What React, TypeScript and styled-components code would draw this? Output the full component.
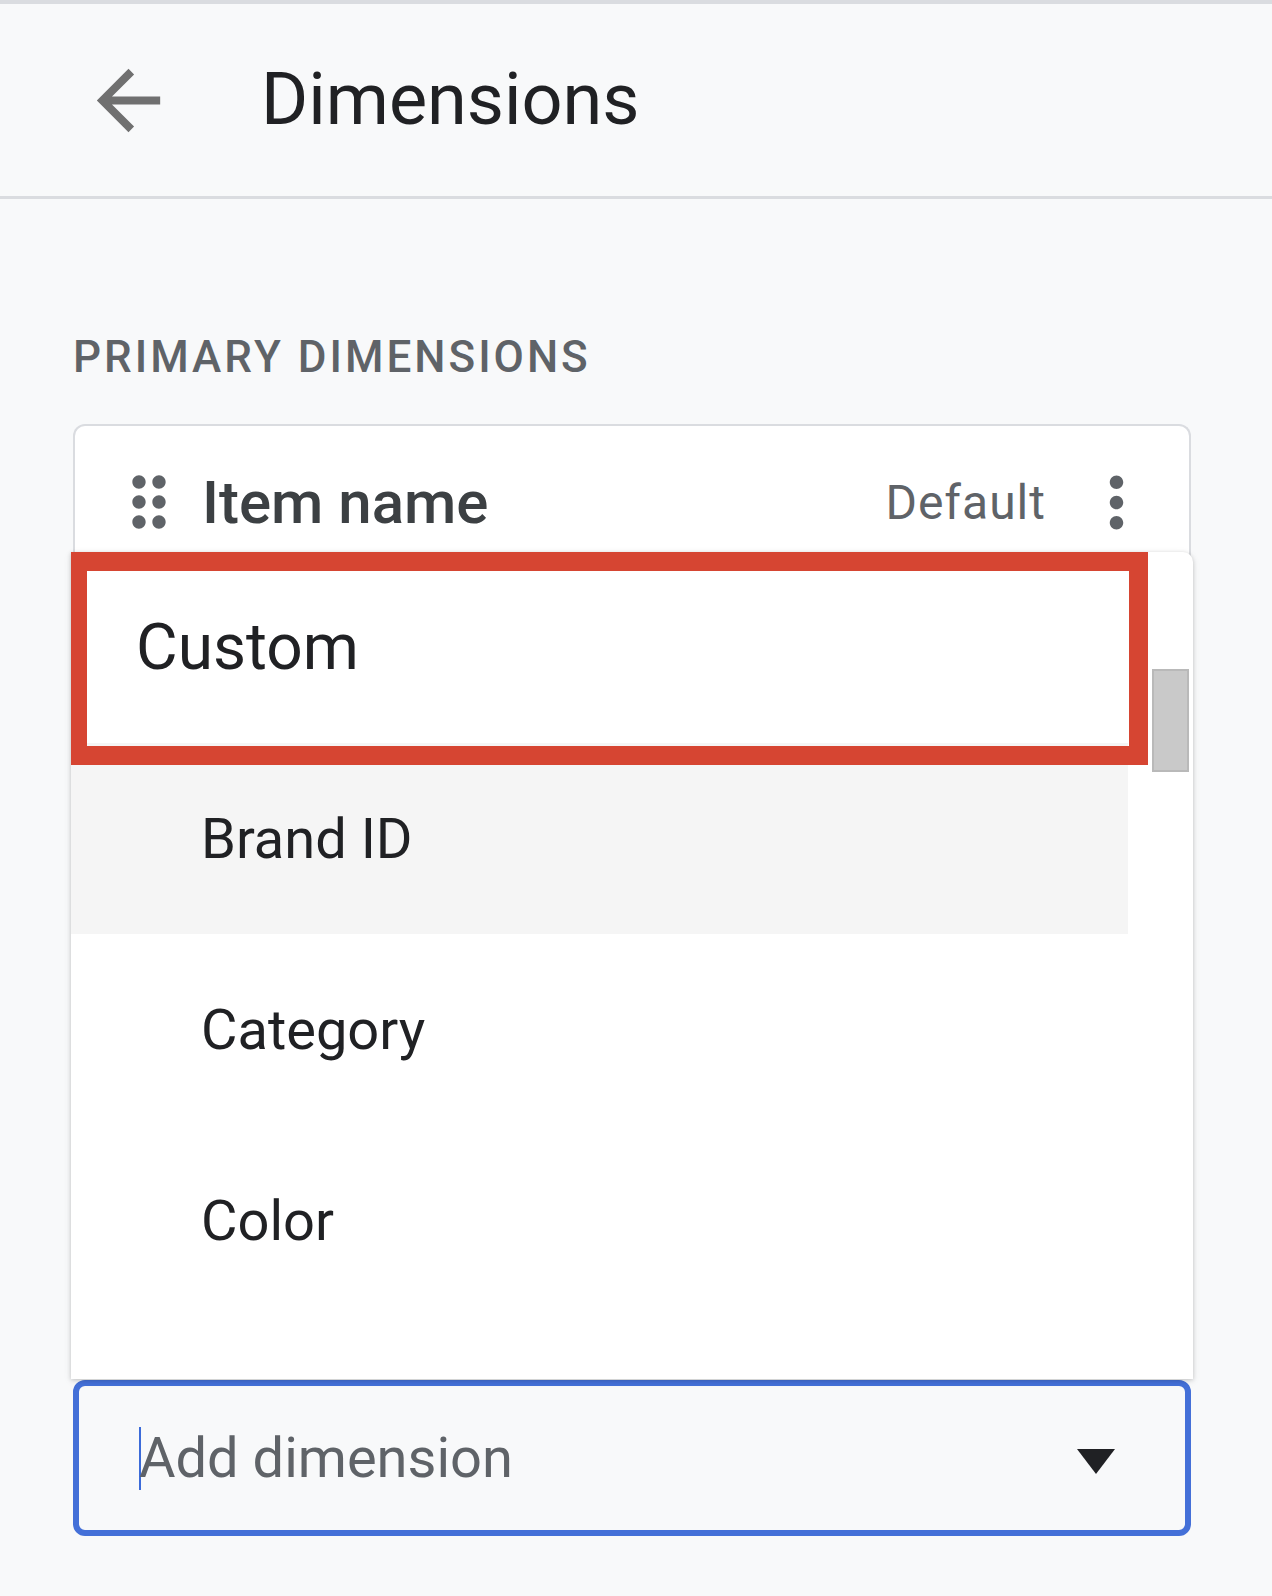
import styled, {createGlobalStyle} from 'styled-components';

const GlobalStyle = createGlobalStyle`
	html, body {
		margin: 0;
		padding: 0;
		background: #f8f9fa;
		font-family: Roboto, 'Noto Sans', Arial, sans-serif;
	}
`;

const Page = styled.div`
	width: 1272px;
	min-height: 1596px;
	background: #f8f9fa;
	border-top: 4px solid #dadce0;
	box-sizing: border-box;
`;

const Header = styled.header`
	height: 195px;
	display: flex;
	align-items: center;
	padding: 0 0 0 81px;
	box-sizing: border-box;
	border-bottom: 3px solid #dadce0;
`;

const BackButton = styled.button`
	width: 95px;
	height: 95px;
	padding: 0;
	border: none;
	background: none;
	color: #707070;
	display: flex;
	cursor: pointer;
`;

const Title = styled.h1`
	margin: 0 0 0 85px;
	font-size: 72px;
	font-weight: 400;
	color: #202124;
	line-height: 1;
`;

const Content = styled.main`
	padding: 136px 81px 0 73px;
`;

const SectionLabel = styled.div`
	font-size: 44px;
	line-height: 1;
	font-weight: 500;
	letter-spacing: 3px;
	color: #5f6368;
	margin-bottom: 45px;
`;

const Card = styled.div`
	width: 1118px;
	height: 910px;
	box-sizing: border-box;
	background: #fff;
	border: 2px solid #dadce0;
	border-radius: 12px 12px 0 0;
	border-bottom: none;
`;

const DimensionRow = styled.div`
	height: 152px;
	display: flex;
	align-items: center;
	padding: 0 32px 0 34px;
`;

const Handle = styled.span`
	width: 80px;
	height: 80px;
	color: #5f6368;
	display: flex;
	margin-right: 13px;
	flex-shrink: 0;
`;

const ItemName = styled.span`
	flex: 1;
	font-size: 60px;
	font-weight: 500;
	color: #3c4043;
`;

const DefaultTag = styled.span`
	font-size: 48px;
	letter-spacing: 1px;
	color: #5f6368;
	margin-right: -5px;
`;

const MoreButton = styled.button`
	width: 81px;
	height: 81px;
	padding: 0;
	border: none;
	background: none;
	color: #5f6368;
	display: flex;
	margin-left: 35px;
	cursor: pointer;
`;

const InputWrap = styled.div`
	position: relative;
	width: 1118px;
	margin-top: 46px;
`;

const Menu = styled.div`
	position: absolute;
	left: -2px;
	right: -2px;
	bottom: calc(100% + 1px);
	height: 827px;
	display: flex;
	background: #fff;
	border-radius: 0 10px 0 0;
	box-shadow: 0 1px 4px rgba(0, 0, 0, 0.18), 0 2px 8px rgba(0, 0, 0, 0.08);
	overflow: hidden;
	z-index: 2;
`;

const OptionList = styled.ul`
	flex: 1;
	list-style: none;
	margin: 0;
	padding: 0;
`;

const Option = styled.li<{$group?: boolean; $hover?: boolean}>`
	height: 191px;
	display: flex;
	align-items: center;
	padding-left: ${p => (p.$group ? '65px' : '130px')};
	font-size: ${p => (p.$group ? '64px' : '56px')};
	color: #202124;
	background: ${p => (p.$hover ? '#f5f5f5' : 'transparent')};
	cursor: pointer;
`;

const ScrollTrack = styled.div`
	width: 65px;
	flex-shrink: 0;
	padding: 117px 4px 0 24px;
	box-sizing: border-box;
`;

const ScrollThumb = styled.div`
	height: 103px;
	background: #c9c9c9;
	border: 2px solid #b9b9b9;
	box-sizing: border-box;
`;

const Highlight = styled.div`
	position: absolute;
	left: -3px;
	top: 0;
	width: 1080px;
	height: 213px;
	box-sizing: border-box;
	border: 19px solid #d64532;
	pointer-events: none;
`;

const InputBox = styled.label`
	height: 156px;
	display: flex;
	align-items: center;
	box-sizing: border-box;
	border: 6px solid #4470d8;
	border-radius: 12px;
	background: #f8f9fa;
	padding: 0 70px 0 60px;
`;

const Caret = styled.span`
	width: 2px;
	height: 63px;
	background: #3b6bd9;
	margin-right: -2px;
	flex-shrink: 0;
`;

const Placeholder = styled.span`
	flex: 1;
	font-size: 56px;
	color: #5f6368;
`;

const DropArrow = styled.span`
	width: 0;
	height: 0;
	border-left: 19px solid transparent;
	border-right: 19px solid transparent;
	border-top: 25px solid #202124;
	margin-top: 6px;
`;

const options = ['Brand ID', 'Category', 'Color'];

const App = () => {
	return (
		<Page>
			<GlobalStyle />
			<Header>
				<BackButton aria-label="Back">
					<svg viewBox="0 0 24 24" width="95" height="95" fill="currentColor">
						<path d="M20 11H7.83l5.59-5.59L12 4l-8 8 8 8 1.41-1.41L7.83 13H20v-2z" />
					</svg>
				</BackButton>
				<Title>Dimensions</Title>
			</Header>
			<Content>
				<SectionLabel>PRIMARY DIMENSIONS</SectionLabel>
				<Card>
					<DimensionRow>
						<Handle>
							<svg viewBox="0 0 24 24" width="80" height="80" fill="currentColor">
								<path d="M11 18c0 1.1-.9 2-2 2s-2-.9-2-2 .9-2 2-2 2 .9 2 2zm-2-8c-1.1 0-2 .9-2 2s.9 2 2 2 2-.9 2-2-.9-2-2-2zm0-6c-1.1 0-2 .9-2 2s.9 2 2 2 2-.9 2-2-.9-2-2-2zm6 4c1.1 0 2-.9 2-2s-.9-2-2-2-2 .9-2 2 .9 2 2 2zm0 2c-1.1 0-2 .9-2 2s.9 2 2 2 2-.9 2-2-.9-2-2-2zm0 6c-1.1 0-2 .9-2 2s.9 2 2 2 2-.9 2-2-.9-2-2-2z" />
							</svg>
						</Handle>
						<ItemName>Item name</ItemName>
						<DefaultTag>Default</DefaultTag>
						<MoreButton aria-label="More">
							<svg viewBox="0 0 24 24" width="81" height="81" fill="currentColor">
								<path d="M12 8c1.1 0 2-.9 2-2s-.9-2-2-2-2 .9-2 2 .9 2 2 2zm0 2c-1.1 0-2 .9-2 2s.9 2 2 2 2-.9 2-2-.9-2-2-2zm0 6c-1.1 0-2 .9-2 2s.9 2 2 2 2-.9 2-2-.9-2-2-2z" />
							</svg>
						</MoreButton>
					</DimensionRow>
				</Card>
				<InputWrap>
					<Menu>
						<OptionList>
							<Option $group>Custom</Option>
							{options.map((o, i) => (
								<Option key={o} $hover={i === 0}>
									{o}
								</Option>
							))}
						</OptionList>
						<ScrollTrack>
							<ScrollThumb />
						</ScrollTrack>
						<Highlight />
					</Menu>
					<InputBox>
						<Caret />
						<Placeholder>Add dimension</Placeholder>
						<DropArrow />
					</InputBox>
				</InputWrap>
			</Content>
		</Page>
	);
};

export default App;
